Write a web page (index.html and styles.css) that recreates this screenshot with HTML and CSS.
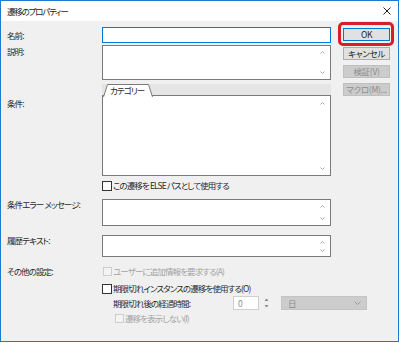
FILE: index.html
```html
<!DOCTYPE html>
<html lang="ja">
<head>
    <meta charset="UTF-8">
    <title>遷移のプロパティー</title>
    <link rel="stylesheet" href="styles.css">
</head>
<body>
    <div class="window">
        <div class="titlebar">
            <span class="title">遷移のプロパティー</span>
            <svg class="close" width="8" height="8" viewBox="0 0 8 8">
                <path d="M0.5 0.5 L7.5 7.5 M7.5 0.5 L0.5 7.5" stroke="#222" stroke-width="1" fill="none"/>
            </svg>
        </div>

        <div class="content">
            <div class="form">
                <div class="row row-name">
                    <span class="label">名前:</span>
                    <div class="field field-focus"></div>
                </div>

                <div class="row row-desc">
                    <span class="label">説明:</span>
                    <div class="field area area-desc">
                        <div class="scroll">
                            <svg class="chev" width="5" height="3"><path d="M0.5 2.5 L2.5 0.5 L4.5 2.5" /></svg>
                            <svg class="chev" width="5" height="3"><path d="M0.5 0.5 L2.5 2.5 L4.5 0.5" /></svg>
                        </div>
                    </div>
                </div>

                <div class="row row-cond">
                    <span class="label label-cond">条件:</span>
                    <div class="tabs">
                        <div class="tab-strip">
                            <div class="tab">
                                <svg class="tab-shape" width="50" height="13" viewBox="0 0 50 13">
                                    <path d="M0.5 13 L4.5 0.5 L45.5 0.5 L49.5 13" fill="#fff" stroke="#7a7a7a"/>
                                </svg>
                                <span class="tab-text">カテゴリー</span>
                            </div>
                        </div>
                        <div class="field area area-cond">
                            <div class="scroll">
                                <svg class="chev" width="5" height="3"><path d="M0.5 2.5 L2.5 0.5 L4.5 2.5" /></svg>
                                <svg class="chev" width="5" height="3"><path d="M0.5 0.5 L2.5 2.5 L4.5 0.5" /></svg>
                            </div>
                        </div>
                    </div>
                </div>

                <div class="row row-else">
                    <span class="label"></span>
                    <div class="check">
                        <span class="box"></span>
                        <span>この遷移を ELSE パスとして使用する</span>
                    </div>
                </div>

                <div class="row row-err">
                    <span class="label">条件エラー メッセージ:</span>
                    <div class="field area area-err">
                        <div class="scroll">
                            <svg class="chev" width="5" height="3"><path d="M0.5 2.5 L2.5 0.5 L4.5 2.5" /></svg>
                            <svg class="chev" width="5" height="3"><path d="M0.5 0.5 L2.5 2.5 L4.5 0.5" /></svg>
                        </div>
                    </div>
                </div>

                <div class="row row-hist">
                    <span class="label">履歴テキスト:</span>
                    <div class="field area area-hist">
                        <div class="scroll">
                            <svg class="chev" width="5" height="3"><path d="M0.5 2.5 L2.5 0.5 L4.5 2.5" /></svg>
                            <svg class="chev" width="5" height="3"><path d="M0.5 0.5 L2.5 2.5 L4.5 0.5" /></svg>
                        </div>
                    </div>
                </div>

                <div class="row row-other">
                    <span class="label">その他の設定:</span>
                    <div class="check disabled">
                        <span class="box"></span>
                        <span>ユーザーに追加情報を要求する(A)</span>
                    </div>
                </div>

                <div class="row row-expire">
                    <span class="label"></span>
                    <div class="check">
                        <span class="box"></span>
                        <span>期限切れインスタンスの遷移を使用する(O)</span>
                    </div>
                </div>

                <div class="row row-elapsed">
                    <span class="label"></span>
                    <div class="elapsed">
                        <span class="elapsed-label">期限切れ後の経過時間:</span>
                        <div class="spin-input">0</div>
                        <svg class="spin" width="7" height="14" viewBox="0 0 7 14">
                            <path d="M1.5 5 L3.5 2.5 L5.5 5 Z" fill="#888"/>
                            <path d="M1.5 9 L3.5 11.5 L5.5 9 Z" fill="#888"/>
                        </svg>
                        <div class="select">
                            <span>日</span>
                            <svg class="chev chev-select" width="7" height="4"><path d="M0.5 0.5 L3.5 3.5 L6.5 0.5" /></svg>
                        </div>
                    </div>
                </div>

                <div class="row row-hide">
                    <span class="label"></span>
                    <div class="check disabled indent">
                        <span class="box"></span>
                        <span>遷移を表示しない(I)</span>
                    </div>
                </div>
            </div>

            <div class="buttons">
                <button class="btn btn-default">OK</button>
                <button class="btn">キャンセル</button>
                <button class="btn" disabled>検証(V)</button>
                <button class="btn" disabled>マクロ(M)...</button>
            </div>
        </div>
    </div>
</body>
</html>
```

FILE: styles.css
```css
* {
    margin: 0;
    padding: 0;
    box-sizing: border-box;
}

body {
    font-family: "Noto Sans CJK JP", "Noto Sans", sans-serif;
    font-size: 8.5px;
    line-height: 11px;
    letter-spacing: -0.9px;
    font-feature-settings: "palt";
    color: #2a2a2a;
    background: #fff;
}

.window {
    width: 399px;
    height: 342px;
    border: 1px solid #1d7ad2;
    background: #f0f0f0;
    display: flex;
    flex-direction: column;
}

.titlebar {
    height: 20px;
    background: #fff;
    display: flex;
    align-items: center;
    justify-content: space-between;
    padding: 0 7px 0 6px;
}

.title {
    color: #222;
    letter-spacing: -1.2px;
}

.content {
    display: flex;
    padding: 6px 0 0 6px;
}

/* form column */

.form {
    width: 324px;
}

.row {
    display: flex;
}

.label {
    width: 95px;
    flex-shrink: 0;
}

.field {
    width: 229px;
    background: #fff;
    border: 1px solid #7a7a7a;
}

.field-focus {
    height: 16px;
    border-color: #0078d7;
}

.row-name {
    align-items: center;
}

.row-desc {
    margin-top: 2px;
}

.row-desc .label {
    padding-top: 1px;
}

.area {
    display: flex;
    justify-content: flex-end;
}

.area-desc {
    height: 35px;
}

.scroll {
    width: 15px;
    display: flex;
    flex-direction: column;
    justify-content: space-between;
    align-items: center;
    padding: 5px 0 5px;
}

.chev path {
    fill: none;
    stroke: #a9a9a9;
    stroke-width: 1;
}

/* tab control */

.row-cond {
    margin-top: 4px;
}

.label-cond {
    padding-top: 14px;
}

.tabs {
    width: 229px;
}

.tab-strip {
    height: 12px;
    background: #e5e5e5;
    padding-left: 1px;
}

.tab {
    position: relative;
    width: 50px;
    height: 13px;
}

.tab-shape {
    position: absolute;
    left: 0;
    top: 0;
}

.tab-text {
    position: relative;
    display: block;
    padding: 1px 0 0 7px;
    line-height: 11px;
}

.area-cond {
    height: 81px;
    margin-top: -1px;
    padding-top: 1px;
}

/* checkboxes */

.check {
    display: flex;
    align-items: center;
    gap: 1px;
    height: 11px;
}

.box {
    width: 10px;
    height: 10px;
    border: 1px solid #333;
    background: #fff;
    flex-shrink: 0;
}

.check.disabled {
    color: #a3a3a3;
}

.check.disabled .box {
    width: 9px;
    height: 9px;
    margin-left: 1px;
    border-color: #cdcdcd;
    background: #f4f4f4;
}

.indent {
    padding-left: 12px;
}

.row-else {
    margin-top: 4px;
    align-items: center;
}

.row-err {
    margin-top: 8px;
}

.area-err {
    height: 27px;
}

.row-hist {
    margin-top: 9px;
}

.area-hist {
    height: 22px;
}

.row-hist .scroll {
    padding: 5px 0 4px;
}

.row-other {
    margin-top: 9px;
    align-items: center;
}

.row-expire {
    margin-top: 6px;
    align-items: center;
}

/* elapsed time */

.row-elapsed {
    margin-top: 2px;
    align-items: center;
}

.elapsed {
    display: flex;
    align-items: center;
    padding-left: 11px;
}

.elapsed-label {
    width: 120px;
}

.spin-input {
    width: 26px;
    height: 14px;
    border: 1px solid #cfcfcf;
    background: #fff;
    color: #8c8c8c;
    padding-left: 4px;
    line-height: 12px;
}

.spin {
    margin-left: 4px;
}

.select {
    width: 86px;
    height: 14px;
    margin-left: 11px;
    background: #cccccc;
    border: 1px solid #c4c4c4;
    color: #8a8a8a;
    display: flex;
    align-items: center;
    justify-content: space-between;
    padding: 0 5px 0 6px;
}

.chev-select path {
    stroke: #9a9a9a;
}

.row-hide {
    margin-top: 3px;
    align-items: center;
}

/* buttons */

.buttons {
    display: flex;
    flex-direction: column;
    margin-left: 12px;
    padding-top: 1px;
    gap: 5px;
}

.btn {
    width: 47px;
    height: 13px;
    font-family: inherit;
    font-size: 8.5px;
    line-height: 11px;
    letter-spacing: -0.3px;
    font-feature-settings: "palt";
    color: #222;
    background: #e1e1e1;
    border: 1px solid #adadad;
}

.btn-default {
    position: relative;
    border-color: #0078d7;
    margin-bottom: 1px;
}

.btn-default::after {
    content: "";
    position: absolute;
    left: -6px;
    right: -5px;
    top: -7px;
    bottom: -6px;
    border: 3px solid #d81e26;
    border-radius: 5px;
}

.btn:disabled {
    color: #8d8d8d;
    background: #cccccc;
    border-color: #bfbfbf;
}
```
